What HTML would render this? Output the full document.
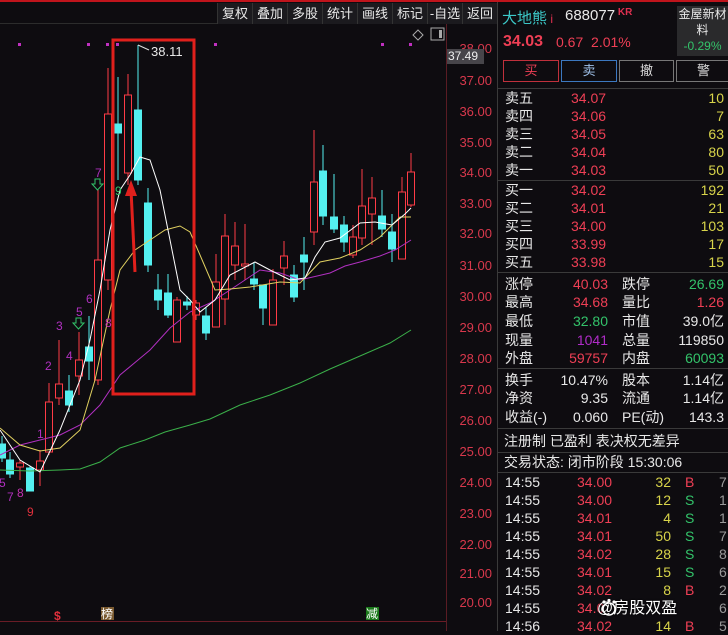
<!DOCTYPE html>
<html><head><meta charset="utf-8"><style>
*{margin:0;padding:0;box-sizing:border-box}
body{width:728px;height:631px;background:#0e0c10;overflow:hidden;position:relative;font-family:"Liberation Sans","Noto Sans CJK SC",sans-serif;color:#ddd}
.a{position:absolute;white-space:nowrap}
.tb{position:absolute;top:3px;height:21px;background:#1b1a1e;color:#e8e8e8;font-size:13px;line-height:21px;text-align:center;border-left:1px solid #333}
.row{position:absolute;left:497px;width:231px;height:18px;font-size:14px;line-height:18px}
.row span{position:absolute}
.r{color:#ef3f55}.g{color:#33c36a}.y{color:#d8d44a}.w{color:#e8e8e8}.p{color:#b02cc8}
.sep{position:absolute;left:497px;width:231px;height:1px;background:#3a3a3a}
.ax{position:absolute;left:452px;width:40px;text-align:right;font-size:13px;color:#d8384c}
</style></head><body>
<div class="a" style="left:0;top:0;width:728px;height:2px;background:#c0141c"></div>
<div class="a" style="left:0;top:23px;width:217px;height:1px;background:#2c2c2c"></div>
<div class="tb" style="left:217px;width:35px">复权</div>
<div class="tb" style="left:252px;width:35px">叠加</div>
<div class="tb" style="left:287px;width:35px">多股</div>
<div class="tb" style="left:322px;width:35px">统计</div>
<div class="tb" style="left:357px;width:35px">画线</div>
<div class="tb" style="left:392px;width:35px">标记</div>
<div class="tb" style="left:427px;width:35px">-自选</div>
<div class="tb" style="left:462px;width:35px">返回</div>

<svg class="a" style="left:0;top:0" width="497" height="631">
<line x1="446.5" y1="24" x2="446.5" y2="631" stroke="#5a1c24"/>
<line x1="0" y1="621.5" x2="446" y2="621.5" stroke="#6a1c26"/>
<g fill="#c030c0"><rect x="18" y="43" width="3" height="3"/><rect x="87" y="43" width="3" height="3"/><rect x="106" y="43" width="3" height="3"/><rect x="116" y="43" width="3" height="3"/><rect x="214" y="43" width="3" height="3"/><rect x="381" y="43" width="3" height="3"/><rect x="409" y="43" width="3" height="3"/></g>
<path d="M418 30 l5 5 -5 5 -5 -5z" fill="none" stroke="#aaa"/>
<rect x="431" y="28" width="13" height="12" fill="none" stroke="#aaa"/><rect x="439" y="30" width="3" height="8" fill="#aaa"/>
<g stroke-width="1">
<g stroke="#ff3b46" fill="#0e0c10">
<line x1="20" y1="460" x2="20" y2="480"/><rect x="16.5" y="463" width="7" height="4"/>
<line x1="40" y1="450" x2="40" y2="486"/><rect x="36.5" y="461" width="7" height="9"/>
<line x1="49" y1="383" x2="49" y2="455"/><rect x="45.5" y="402" width="7" height="50"/>
<line x1="59" y1="340" x2="59" y2="405"/><rect x="55.5" y="384" width="7" height="14"/>
<line x1="79" y1="332" x2="79" y2="395"/><rect x="75.5" y="360" width="7" height="16"/>
<line x1="98" y1="190" x2="98" y2="385"/><rect x="94.5" y="260" width="7" height="120"/>
<line x1="108" y1="68" x2="108" y2="290"/><rect x="104.5" y="114" width="7" height="166"/>
<line x1="128" y1="74" x2="128" y2="185"/><rect x="124.5" y="95" width="7" height="78"/>
<line x1="177" y1="297" x2="177" y2="342"/><rect x="173.5" y="300" width="7" height="42"/>
<line x1="196" y1="300" x2="196" y2="320"/><rect x="192.5" y="303" width="7" height="12"/>
<line x1="216" y1="254" x2="216" y2="327"/><rect x="212.5" y="282" width="7" height="45"/>
<line x1="225" y1="214" x2="225" y2="325"/><rect x="221.5" y="236" width="7" height="63"/>
<line x1="235" y1="222" x2="235" y2="280"/><rect x="231.5" y="246" width="7" height="19"/>
<line x1="245" y1="224" x2="245" y2="280"/><rect x="241.5" y="264" width="7" height="2"/>
<line x1="273" y1="269" x2="273" y2="325"/><rect x="269.5" y="280" width="7" height="45"/>
<line x1="284" y1="241" x2="284" y2="285"/><rect x="280.5" y="256" width="7" height="12"/>
<line x1="314" y1="130" x2="314" y2="245"/><rect x="310.5" y="182" width="7" height="50"/>
<line x1="353" y1="225" x2="353" y2="258"/><rect x="349.5" y="237" width="7" height="18"/>
<line x1="362" y1="169" x2="362" y2="245"/><rect x="358.5" y="206" width="7" height="32"/>
<line x1="372" y1="177" x2="372" y2="245"/><rect x="368.5" y="198" width="7" height="16"/>
<line x1="402" y1="177" x2="402" y2="259"/><rect x="398.5" y="192" width="7" height="67"/>
<line x1="411" y1="153" x2="411" y2="207"/><rect x="407.5" y="172" width="7" height="33"/>
</g>
<g stroke="#54f0f0" fill="#54f0f0">
<line x1="2" y1="436" x2="2" y2="462"/><rect x="-1.5" y="444" width="7" height="14"/>
<line x1="10" y1="452" x2="10" y2="478"/><rect x="6.5" y="460" width="7" height="14"/>
<line x1="30" y1="466" x2="30" y2="491"/><rect x="26.5" y="468" width="7" height="23"/>
<line x1="69" y1="375" x2="69" y2="412"/><rect x="65.5" y="391" width="7" height="14"/>
<line x1="89" y1="316" x2="89" y2="380"/><rect x="85.5" y="347" width="7" height="14"/>
<line x1="118" y1="77" x2="118" y2="180"/><rect x="114.5" y="124" width="7" height="9"/>
<line x1="138" y1="45" x2="138" y2="185"/><rect x="134.5" y="110" width="7" height="70"/>
<line x1="148" y1="188" x2="148" y2="272"/><rect x="144.5" y="203" width="7" height="62"/>
<line x1="158" y1="274" x2="158" y2="310"/><rect x="154.5" y="290" width="7" height="10"/>
<line x1="168" y1="274" x2="168" y2="318"/><rect x="164.5" y="293" width="7" height="22"/>
<line x1="187" y1="296" x2="187" y2="310"/><rect x="183.5" y="302" width="7" height="3"/>
<line x1="206" y1="307" x2="206" y2="340"/><rect x="202.5" y="316" width="7" height="17"/>
<line x1="254" y1="262" x2="254" y2="290"/><rect x="250.5" y="279" width="7" height="5"/>
<line x1="263" y1="285" x2="263" y2="325"/><rect x="259.5" y="285" width="7" height="23"/>
<line x1="294" y1="265" x2="294" y2="302"/><rect x="290.5" y="275" width="7" height="22"/>
<line x1="304" y1="237" x2="304" y2="290"/><rect x="300.5" y="255" width="7" height="7"/>
<line x1="323" y1="145" x2="323" y2="225"/><rect x="319.5" y="171" width="7" height="45"/>
<line x1="334" y1="174" x2="334" y2="233"/><rect x="330.5" y="217" width="7" height="12"/>
<line x1="344" y1="216" x2="344" y2="252"/><rect x="340.5" y="225" width="7" height="17"/>
<line x1="382" y1="190" x2="382" y2="237"/><rect x="378.5" y="216" width="7" height="13"/>
<line x1="392" y1="214" x2="392" y2="262"/><rect x="388.5" y="232" width="7" height="17"/>
</g>
</g>
<g fill="none" stroke-width="1">
<polyline stroke="#3bb04a" points="0,470 30,471 60,470 80,469 100,462 120,448 145,440 165,432 190,425 210,419 240,405 270,395 300,383 330,369 360,356 390,343 411,330"/>
<polyline stroke="#b030c0" points="0,455 20,445 40,440 60,435 80,425 100,405 120,375 138,360 150,350 170,328 190,312 210,303 230,290 260,270 280,273 300,280 330,273 345,266 360,262 380,256 395,250 411,240"/>
<polyline stroke="#e0d060" points="0,428 20,445 40,451 60,448 80,430 95,380 110,310 120,270 135,250 150,240 165,230 180,226 190,232 200,255 215,290 230,289 250,287 280,282 300,283 320,262 340,258 360,250 380,237 400,217 411,217"/>
<polyline stroke="#ffffff" points="0,430 20,460 40,472 60,430 80,380 90,340 100,290 110,230 120,190 130,175 140,157 150,160 160,190 170,240 180,290 190,300 200,312 215,300 230,275 255,262 270,270 290,280 305,278 315,257 325,242 340,238 360,223 375,222 392,225 405,214 411,208"/>
</g>
<rect x="113" y="40" width="81" height="354" fill="none" stroke="#e0201c" stroke-width="3"/>
<path d="M135 272 L131 190" stroke="#e0201c" stroke-width="3"/>
<path d="M125 196 L131 180 L137 196z" fill="#e0201c"/>
<path d="M138 45 L149 50" stroke="#ddd"/>
<text x="151" y="56" fill="#e8e8e8" font-size="13" font-family="Liberation Sans">38.11</text>
<g font-family="Liberation Sans" font-size="12">
<text x="37" y="438" fill="#b030c0">1</text><text x="45" y="370" fill="#b030c0">2</text><text x="56" y="330" fill="#b030c0">3</text><text x="66" y="360" fill="#b030c0">4</text><text x="76" y="316" fill="#b030c0">5</text><text x="86" y="303" fill="#b030c0">6</text><text x="95" y="177" fill="#b030c0">7</text><text x="105" y="327" fill="#c030b0">8</text><text x="115" y="195" fill="#33c36a">9</text>
<text x="-1" y="487" fill="#b030c0">5</text><text x="7" y="501" fill="#b030c0">7</text><text x="17" y="497" fill="#c030b0">8</text><text x="27" y="516" fill="#e0303c">9</text>
</g>
<path d="M76 318 h5 v5 h3 l-5.5 6 -5.5 -6 h3z" fill="none" stroke="#33c36a"/>
<path d="M95 179 h5 v5 h3 l-5.5 6 -5.5 -6 h3z" fill="none" stroke="#33c36a"/>
<text x="54" y="620" fill="#e0303c" font-size="12" font-weight="bold" font-family="Liberation Sans">$</text>
<rect x="101" y="607" width="13" height="13" fill="#7a5a30"/><text x="101" y="618" fill="#fff" font-size="12" font-family="Noto Sans CJK SC">榜</text>
<rect x="366" y="607" width="13" height="13" fill="#1c7a1c"/><text x="366" y="618" fill="#fff" font-size="12" font-family="Noto Sans CJK SC">减</text>
</svg>
<div class="ax" style="top:41px">38.00</div>
<div class="a" style="left:447px;top:49px;width:37px;height:15px;background:#47454a;color:#eee;font-size:12px;line-height:15px;padding-left:1px">37.49</div>
<div class="ax" style="top:73px">37.00</div><div class="ax" style="top:104px">36.00</div><div class="ax" style="top:135px">35.00</div><div class="ax" style="top:165px">34.00</div><div class="ax" style="top:196px">33.00</div><div class="ax" style="top:226px">32.00</div><div class="ax" style="top:258px">31.00</div><div class="ax" style="top:289px">30.00</div><div class="ax" style="top:320px">29.00</div><div class="ax" style="top:351px">28.00</div><div class="ax" style="top:382px">27.00</div><div class="ax" style="top:413px">26.00</div><div class="ax" style="top:444px">25.00</div><div class="ax" style="top:475px">24.00</div><div class="ax" style="top:506px">23.00</div><div class="ax" style="top:537px">22.00</div><div class="ax" style="top:566px">21.00</div><div class="ax" style="top:595px">20.00</div>

<div class="a" style="left:497px;top:2px;width:1px;height:629px;background:#3a3a3a"></div>
<div class="a" style="left:502px;top:7px;font-size:15px;color:#3cc8c8">大地熊<span style="color:#e03050;font-size:12px"> i</span></div>
<div class="a" style="left:565px;top:7px;font-size:15px;color:#e8e8e8">688077<span style="color:#e03050;font-size:10px;font-weight:bold;vertical-align:top"> KR</span></div>
<div class="a" style="left:677px;top:6px;width:51px;height:50px;background:#2a2a2c;color:#e8e8e8;font-size:12px;text-align:center;line-height:16px;white-space:normal">金屋新材<br>料<br><span class="g">-0.29%</span></div>
<div class="a r" style="left:503px;top:33px;font-size:16px;font-weight:bold">34.03</div>
<div class="a r" style="left:556px;top:34px;font-size:14px">0.67&nbsp; 2.01%</div>
<div class="a" style="left:503px;top:60px;width:56px;height:22px;border:1px solid #c0303c;color:#ef3f55;text-align:center;font-size:13px;line-height:20px">买</div>
<div class="a" style="left:561px;top:60px;width:56px;height:22px;border:1px solid #3c78c0;color:#9fc0e8;text-align:center;font-size:13px;line-height:20px">卖</div>
<div class="a" style="left:619px;top:60px;width:55px;height:22px;border:1px solid #777;color:#ddd;text-align:center;font-size:13px;line-height:20px">撤</div>
<div class="a" style="left:676px;top:60px;width:55px;height:22px;border:1px solid #777;color:#ddd;text-align:center;font-size:13px;line-height:20px">警</div>
<div class="sep" style="top:88px"></div>

<div class="row" style="top:89px"><span class="w" style="left:8px">卖五</span><span class="r" style="left:74px">34.07</span><span class="y" style="right:4px">10</span></div>
<div class="row" style="top:107px"><span class="w" style="left:8px">卖四</span><span class="r" style="left:74px">34.06</span><span class="y" style="right:4px">7</span></div>
<div class="row" style="top:125px"><span class="w" style="left:8px">卖三</span><span class="r" style="left:74px">34.05</span><span class="y" style="right:4px">63</span></div>
<div class="row" style="top:143px"><span class="w" style="left:8px">卖二</span><span class="r" style="left:74px">34.04</span><span class="y" style="right:4px">80</span></div>
<div class="row" style="top:161px"><span class="w" style="left:8px">卖一</span><span class="r" style="left:74px">34.03</span><span class="y" style="right:4px">50</span></div>
<div class="sep" style="top:180px"></div>
<div class="row" style="top:181px"><span class="w" style="left:8px">买一</span><span class="r" style="left:74px">34.02</span><span class="y" style="right:4px">192</span></div>
<div class="row" style="top:199px"><span class="w" style="left:8px">买二</span><span class="r" style="left:74px">34.01</span><span class="y" style="right:4px">21</span></div>
<div class="row" style="top:217px"><span class="w" style="left:8px">买三</span><span class="r" style="left:74px">34.00</span><span class="y" style="right:4px">103</span></div>
<div class="row" style="top:235px"><span class="w" style="left:8px">买四</span><span class="r" style="left:74px">33.99</span><span class="y" style="right:4px">17</span></div>
<div class="row" style="top:253px"><span class="w" style="left:8px">买五</span><span class="r" style="left:74px">33.98</span><span class="y" style="right:4px">15</span></div>
<div class="sep" style="top:272px"></div>
<div class="row" style="top:275px"><span class="w" style="left:8px">涨停</span><span class="r" style="right:120px">40.03</span><span class="w" style="left:125px">跌停</span><span class="g" style="right:4px">26.69</span></div>
<div class="row" style="top:293px"><span class="w" style="left:8px">最高</span><span class="r" style="right:120px">34.68</span><span class="w" style="left:125px">量比</span><span class="r" style="right:4px">1.26</span></div>
<div class="row" style="top:312px"><span class="w" style="left:8px">最低</span><span class="g" style="right:120px">32.80</span><span class="w" style="left:125px">市值</span><span class="w" style="right:4px">39.0亿</span></div>
<div class="row" style="top:331px"><span class="w" style="left:8px">现量</span><span class="p" style="right:120px">1041</span><span class="w" style="left:125px">总量</span><span class="w" style="right:4px">119850</span></div>
<div class="row" style="top:349px"><span class="w" style="left:8px">外盘</span><span class="r" style="right:120px">59757</span><span class="w" style="left:125px">内盘</span><span class="g" style="right:4px">60093</span></div>
<div class="sep" style="top:368px"></div>
<div class="row" style="top:371px"><span class="w" style="left:8px">换手</span><span class="w" style="right:120px">10.47%</span><span class="w" style="left:125px">股本</span><span class="w" style="right:4px">1.14亿</span></div>
<div class="row" style="top:389px"><span class="w" style="left:8px">净资</span><span class="w" style="right:120px">9.35</span><span class="w" style="left:125px">流通</span><span class="w" style="right:4px">1.14亿</span></div>
<div class="row" style="top:408px"><span class="w" style="left:8px">收益(-)</span><span class="w" style="right:120px">0.060</span><span class="w" style="left:125px">PE(动)</span><span class="w" style="right:4px">143.3</span></div>
<div class="sep" style="top:428px"></div>
<div class="row" style="top:432px"><span class="w" style="left:7px">注册制 已盈利 表决权无差异</span></div>
<div class="sep" style="top:452px"></div>
<div class="row" style="top:453px"><span class="w" style="left:7px">交易状态: 闭市阶段 15:30:06</span></div>
<div class="sep" style="top:472px"></div>
<div class="row" style="top:473px"><span class="w" style="left:8px">14:55</span><span class="r" style="left:80px">34.00</span><span class="y" style="right:57px">32</span><span class="r" style="left:188px">B</span><span class="w" style="left:222px;color:#999">7</span></div>
<div class="row" style="top:491px"><span class="w" style="left:8px">14:55</span><span class="r" style="left:80px">34.00</span><span class="y" style="right:57px">12</span><span class="g" style="left:188px">S</span><span class="w" style="left:222px;color:#999">1</span></div>
<div class="row" style="top:509px"><span class="w" style="left:8px">14:55</span><span class="r" style="left:80px">34.01</span><span class="y" style="right:57px">4</span><span class="g" style="left:188px">S</span><span class="w" style="left:222px;color:#999">1</span></div>
<div class="row" style="top:527px"><span class="w" style="left:8px">14:55</span><span class="r" style="left:80px">34.01</span><span class="y" style="right:57px">50</span><span class="g" style="left:188px">S</span><span class="w" style="left:222px;color:#999">7</span></div>
<div class="row" style="top:545px"><span class="w" style="left:8px">14:55</span><span class="r" style="left:80px">34.02</span><span class="y" style="right:57px">28</span><span class="g" style="left:188px">S</span><span class="w" style="left:222px;color:#999">8</span></div>
<div class="row" style="top:563px"><span class="w" style="left:8px">14:55</span><span class="r" style="left:80px">34.01</span><span class="y" style="right:57px">15</span><span class="g" style="left:188px">S</span><span class="w" style="left:222px;color:#999">6</span></div>
<div class="row" style="top:581px"><span class="w" style="left:8px">14:55</span><span class="r" style="left:80px">34.02</span><span class="y" style="right:57px">8</span><span class="r" style="left:188px">B</span><span class="w" style="left:222px;color:#999">2</span></div>
<div class="row" style="top:599px"><span class="w" style="left:8px">14:55</span><span class="r" style="left:80px">34.0</span><span class="w" style="left:222px;color:#999">6</span></div>
<div class="row" style="top:617px"><span class="w" style="left:8px">14:56</span><span class="r" style="left:80px">34.02</span><span class="y" style="right:57px">14</span><span class="r" style="left:188px">B</span><span class="w" style="left:222px;color:#999">5</span></div>
<div class="a" style="left:597px;top:594px;font-size:16px;color:#fff;text-shadow:0 0 2px #000">@房股双盈</div>
<svg class="a" style="left:600px;top:598px" width="18" height="18"><circle cx="9" cy="11" r="6" fill="none" stroke="#fff" stroke-width="1.5"/><circle cx="4" cy="4" r="1.6" fill="#fff"/><circle cx="9" cy="2.5" r="1.6" fill="#fff"/><circle cx="14" cy="4" r="1.6" fill="#fff"/></svg>
</body></html>
